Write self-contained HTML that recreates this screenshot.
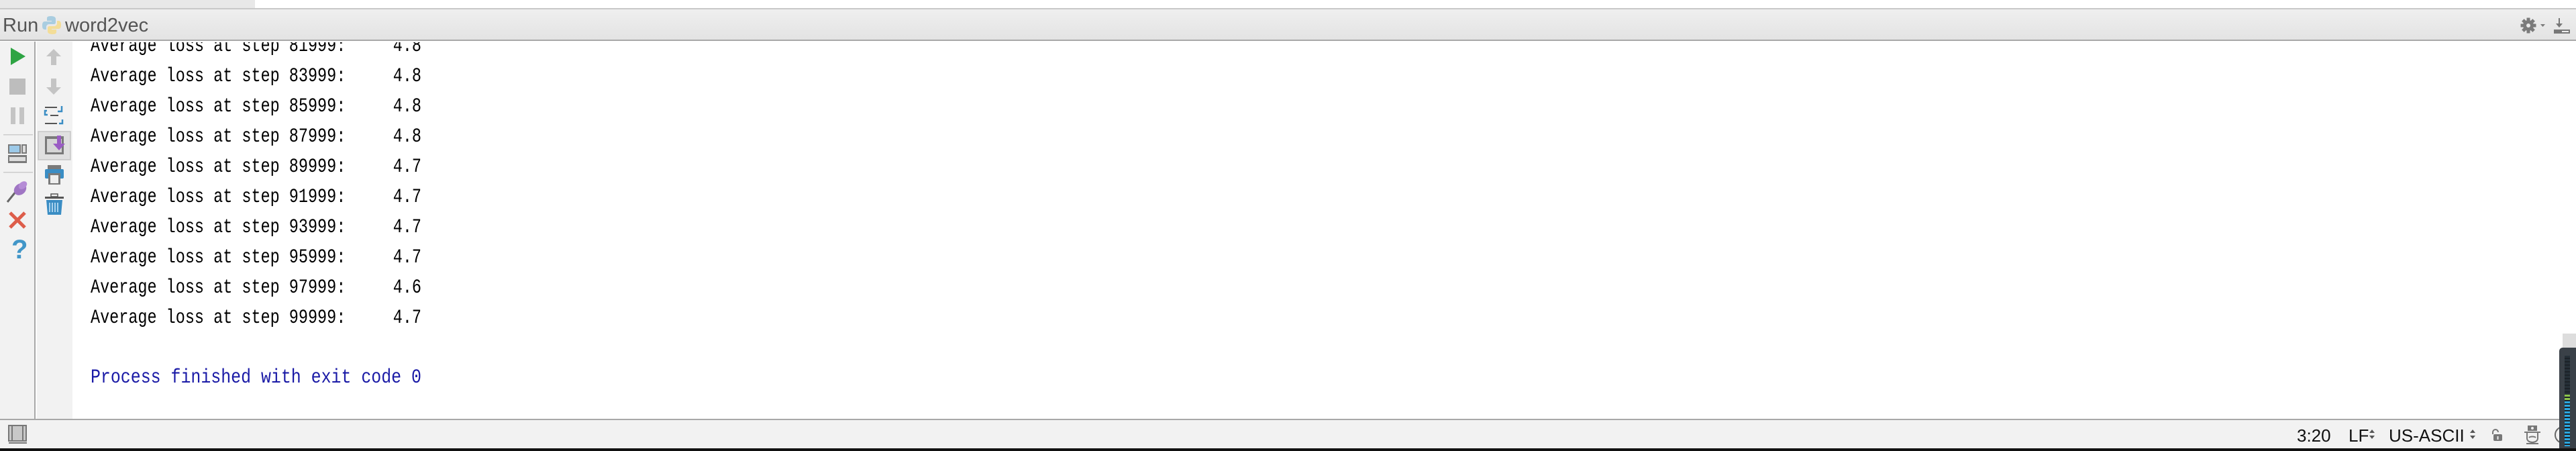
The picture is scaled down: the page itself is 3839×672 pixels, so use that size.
<!DOCTYPE html>
<html><head><meta charset="utf-8"><style>
html,body{margin:0;padding:0;width:3839px;height:672px;overflow:hidden;background:#fff;position:relative;font-family:"Liberation Sans",sans-serif}
div{position:absolute;box-sizing:border-box}
</style></head><body>
<!-- top tab strip -->
<div style="left:0;top:0;width:380px;height:13px;background:#e8e8e8"></div>
<div style="left:380px;top:0;width:3459px;height:13px;background:#fff"></div>
<div style="left:0;top:12px;width:3839px;height:2px;background:#c8c8c8"></div>
<!-- header -->
<div style="left:0;top:14px;width:3839px;height:47px;background:linear-gradient(#efefef,#e3e3e3);border-bottom:2px solid #a8a8a8"></div>
<div style="left:4px;top:18px;font-size:29px;color:#555;line-height:40px">Run</div>
<svg style="position:absolute;left:62px;top:23px" width="30" height="29" viewBox="0 0 30 29">
<path d="M14 1c-6 0-6 2-6 4v3h7v1H5c-3 0-4 2-4 6s1 6 4 6h2v-4c0-2 2-4 4-4h7c2 0 3-1 3-3V5c0-2-2-4-7-4z" fill="#a9cde0"/>
<path d="M16 28c6 0 6-2 6-4v-3h-7v-1h10c3 0 4-2 4-6s-1-6-4-6h-2v4c0 2-2 4-4 4h-7c-2 0-3 1-3 3v5c0 2 2 4 7 4z" fill="#f3dd98"/>
</svg>
<div style="left:97px;top:18px;font-size:29px;color:#555;line-height:40px">word2vec</div>
<!-- gear -->
<svg style="position:absolute;left:3755px;top:26px" width="40" height="24" viewBox="0 0 40 24">
<g fill="#7a7a7a" transform="translate(13,12)">
<circle r="8"/>
<g><rect x="-2.5" y="-11.5" width="5" height="23"/><rect x="-11.5" y="-2.5" width="23" height="5"/>
<rect x="-2.5" y="-11.5" width="5" height="23" transform="rotate(45)"/><rect x="-2.5" y="-11.5" width="5" height="23" transform="rotate(-45)"/></g>
</g>
<circle cx="13" cy="12" r="3" fill="#e8e8e8"/>
<path d="M31 10h7l-3.5 4z" fill="#7a7a7a"/>
</svg>
<svg style="position:absolute;left:3806px;top:27px" width="24" height="23" viewBox="0 0 24 23">
<path d="M8 0v11" stroke="#777" stroke-width="2"/><path d="M3 8l5 6 5-6z" fill="#777"/>
<rect x="0" y="17" width="24" height="6" fill="#777"/><rect x="12" y="19" width="10" height="2" fill="#eee"/>
</svg>
<!-- left toolbars -->
<div style="left:0;top:62px;width:53px;height:563px;background:#f2f2f2;border-right:2px solid #a8a8a8"></div>
<div style="left:55px;top:62px;width:53px;height:563px;background:#f2f2f2"></div>
<svg style="position:absolute;left:0;top:62px" width="108" height="340" viewBox="0 62 108 340">
<path d="M16 71L38 84 16 97z" fill="#2ea443"/>
<rect x="14" y="117" width="24" height="24" fill="#bdbdbd"/>
<rect x="16" y="160" width="7" height="25" fill="#c4c4c4"/><rect x="29" y="160" width="7" height="25" fill="#c4c4c4"/>
<rect x="5" y="200" width="44" height="1.5" fill="#ccc"/>
<rect x="12" y="215" width="19" height="14" fill="#7a7a7a"/><rect x="14" y="217" width="15" height="10" fill="#9cc9e8"/>
<rect x="32" y="215" width="8" height="14" fill="#7a7a7a"/><rect x="34" y="217" width="4" height="10" fill="#ddd"/>
<rect x="12" y="231" width="28" height="12" fill="#7a7a7a"/><rect x="14" y="234" width="24" height="6" fill="#ddd"/>
<rect x="5" y="256" width="44" height="1.5" fill="#ccc"/>
<path d="M11 301L24 285" stroke="#666" stroke-width="3"/>
<ellipse cx="30" cy="282" rx="10" ry="8" fill="#a076c4" transform="rotate(-40 30 282)"/>
<ellipse cx="34" cy="276" rx="7" ry="5" fill="#b58cd6" transform="rotate(-40 34 276)"/>
<path d="M15 317L37 339M37 317L15 339" stroke="#dd5d4a" stroke-width="5"/>
<text x="17" y="385" font-family="Liberation Sans" font-weight="bold" font-size="40" fill="#4196c8">?</text>
<path d="M80 73l-11 11h7v13h8V84h7z" fill="#c4c4c4"/>
<path d="M80 141l-11-11h7V117h8v13h7z" fill="#c4c4c4"/>
<g fill="#555"><rect x="67" y="159" width="18" height="2"/><rect x="75" y="171" width="12" height="2"/><rect x="67" y="183" width="18" height="2"/></g>
<path d="M92 158v8h-6M70 165h-3v6h4" stroke="#3a8dc4" stroke-width="2.5" fill="none"/><path d="M93 178v6h-5" stroke="#3a8dc4" stroke-width="2.5" fill="none"/>
<rect x="57" y="196" width="48" height="42" fill="#e0e0e0" stroke="#c6c6c6" stroke-width="1.5"/>
<rect x="67" y="203" width="28" height="27" fill="#7a7a7a"/><rect x="70" y="207" width="22" height="20" fill="#d6d6d6"/>
<path d="M85 202v12h-6l9 10 9-10h-6V202z" fill="#9a5cc4"/>
<rect x="71" y="246" width="20" height="7" fill="#7a7a7a"/><rect x="67" y="252" width="28" height="14" rx="2" fill="#3a8dc4"/>
<rect x="72" y="258" width="18" height="17" fill="#7a7a7a"/><rect x="75" y="261" width="12" height="12" fill="#eee"/>
<rect x="67" y="293" width="28" height="3" fill="#555"/><rect x="76" y="289" width="10" height="4" fill="none" stroke="#555" stroke-width="1.5"/>
<path d="M69 298h24l-2 22H71z" fill="#3a8dc4"/>
<g fill="#aad3ee"><rect x="73" y="302" width="2" height="14"/><rect x="77" y="302" width="2" height="14"/><rect x="81" y="302" width="2" height="14"/><rect x="85" y="302" width="2" height="14"/></g>
</svg>
<!-- console text -->
<svg style="position:absolute;left:0;top:0" width="3839" height="625" viewBox="0 0 3839 625">
<defs><clipPath id="c"><rect x="108" y="63" width="3731" height="562"/></clipPath></defs>
<g clip-path="url(#c)" font-family="Liberation Mono, monospace" font-size="23.5" fill="#000">
<g transform="translate(0,76) scale(1,1.27)"><text x="135" y="0" xml:space="preserve" textLength="493" lengthAdjust="spacingAndGlyphs">Average loss at step 81999:     4.8</text></g>
<g transform="translate(0,121) scale(1,1.27)"><text x="135" y="0" xml:space="preserve" textLength="493" lengthAdjust="spacingAndGlyphs">Average loss at step 83999:     4.8</text></g>
<g transform="translate(0,166) scale(1,1.27)"><text x="135" y="0" xml:space="preserve" textLength="493" lengthAdjust="spacingAndGlyphs">Average loss at step 85999:     4.8</text></g>
<g transform="translate(0,211) scale(1,1.27)"><text x="135" y="0" xml:space="preserve" textLength="493" lengthAdjust="spacingAndGlyphs">Average loss at step 87999:     4.8</text></g>
<g transform="translate(0,256) scale(1,1.27)"><text x="135" y="0" xml:space="preserve" textLength="493" lengthAdjust="spacingAndGlyphs">Average loss at step 89999:     4.7</text></g>
<g transform="translate(0,301) scale(1,1.27)"><text x="135" y="0" xml:space="preserve" textLength="493" lengthAdjust="spacingAndGlyphs">Average loss at step 91999:     4.7</text></g>
<g transform="translate(0,346) scale(1,1.27)"><text x="135" y="0" xml:space="preserve" textLength="493" lengthAdjust="spacingAndGlyphs">Average loss at step 93999:     4.7</text></g>
<g transform="translate(0,391) scale(1,1.27)"><text x="135" y="0" xml:space="preserve" textLength="493" lengthAdjust="spacingAndGlyphs">Average loss at step 95999:     4.7</text></g>
<g transform="translate(0,436) scale(1,1.27)"><text x="135" y="0" xml:space="preserve" textLength="493" lengthAdjust="spacingAndGlyphs">Average loss at step 97999:     4.6</text></g>
<g transform="translate(0,481) scale(1,1.27)"><text x="135" y="0" xml:space="preserve" textLength="493" lengthAdjust="spacingAndGlyphs">Average loss at step 99999:     4.7</text></g>
<g transform="translate(0,570) scale(1,1.27)"><text x="135" y="0" fill="#1a1aa6" xml:space="preserve" textLength="493" lengthAdjust="spacingAndGlyphs">Process finished with exit code 0</text></g>
</g>
</svg>
<!-- status bar -->
<div style="left:0;top:624px;width:3839px;height:2px;background:#a8a8a8"></div>
<div style="left:0;top:626px;width:3839px;height:42px;background:#f2f2f2"></div>
<div style="left:0;top:668px;width:3839px;height:4px;background:#111"></div>
<svg style="position:absolute;left:12px;top:633px" width="30" height="30" viewBox="0 0 30 30">
<rect x="1" y="1" width="26" height="23" fill="#c8c8c8" stroke="#777" stroke-width="2"/>
<rect x="5" y="2" width="2" height="21" fill="#777"/><rect x="21" y="2" width="2" height="21" fill="#777"/>
<rect x="1" y="26" width="27" height="2" fill="#777"/>
</svg>
<div style="left:3423px;top:634px;font-size:26px;line-height:30px;color:#111">3:20</div>
<div style="left:3500px;top:634px;font-size:26px;line-height:30px;color:#111">LF</div>
<svg style="position:absolute;left:3530px;top:638px" width="10" height="18"><path d="M1 7h8L5 2zM1 11h8l-4 5z" fill="#555"/></svg>
<div style="left:3560px;top:634px;font-size:26px;line-height:30px;color:#111">US-ASCII</div>
<svg style="position:absolute;left:3680px;top:638px" width="10" height="18"><path d="M1 7h8L5 2zM1 11h8l-4 5z" fill="#555"/></svg>
<svg style="position:absolute;left:3712px;top:639px" width="18" height="20"><path d="M3 8V5a4 4 0 0 1 8 0" stroke="#777" stroke-width="2" fill="none"/><rect x="4" y="8" width="13" height="10" rx="2" fill="#777"/><rect x="9.5" y="11" width="2" height="5" fill="#eee"/></svg>
<svg style="position:absolute;left:3761px;top:632px" width="26" height="30" viewBox="0 0 26 30"><path d="M6 2h14v8H6z" fill="#777"/><circle cx="13" cy="6" r="2" fill="#eee"/><path d="M1 12h24" stroke="#777" stroke-width="2"/><path d="M5 13v8c0 4 4 6 8 6s8-2 8-6v-8" stroke="#777" stroke-width="2" fill="none"/><path d="M8 20c2-2 8-2 10 0" stroke="#777" stroke-width="2" fill="none"/><path d="M4 29h18" stroke="#777" stroke-width="2"/></svg>
<svg style="position:absolute;left:3800px;top:634px" width="20" height="28"><path d="M20 2a12 12 0 0 0 0 24" stroke="#666" stroke-width="2" fill="none"/></svg>
<!-- floating meter -->
<div style="left:3819px;top:497px;width:20px;height:22px;background:#ddd"></div>
<div style="left:3814px;top:518px;width:25px;height:150px;background:#3a4148;border-radius:5px 0 0 0"></div>
<div style="left:3822px;top:530px;width:8px;height:135px;background:repeating-linear-gradient(#263038 0 3px,#1c2228 3px 5px)"></div>
<div style="left:3822px;top:588px;width:8px;height:77px;background:repeating-linear-gradient(#2aa7e0 0 3px,#1c2228 3px 5px)"></div>
<div style="left:3822px;top:588px;width:8px;height:8px;background:repeating-linear-gradient(#8bc34a 0 3px,#1c2228 3px 5px)"></div>
</body></html>
